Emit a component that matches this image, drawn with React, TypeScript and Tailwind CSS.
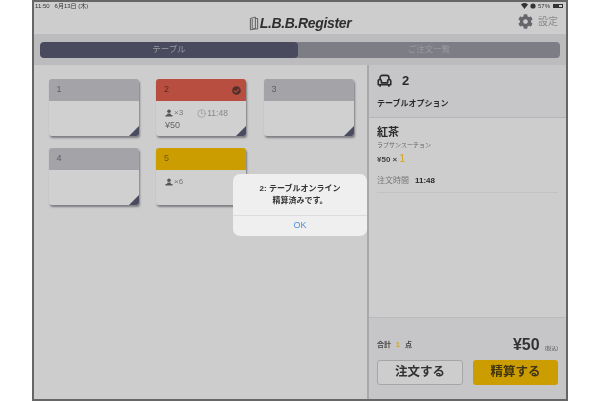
import { Clock3 } from "lucide-react";
import { FaCheckCircle, FaCog } from "react-icons/fa";

const font = { fontFamily: '"Liberation Sans", "Noto Sans CJK JP", sans-serif' };

function GuestIcon() {
  return (
    <svg width="8" height="8" viewBox="0 0 16 16" className="fill-[#55555a]">
      <circle cx="8" cy="4.5" r="3.5" />
      <path d="M5 9h6l1 3h3v3H1v-3h3z" />
    </svg>
  );
}

function BookIcon() {
  return (
    <svg width="10" height="15" viewBox="0 0 11 16" fill="none" className="stroke-[#555]">
      <path d="M1.5 2.5 7 1v12.5L1.5 15z" />
      <path d="M7 2.5h2.5V14H3" />
      <path d="M3.5 3v10" />
    </svg>
  );
}

function SofaIcon() {
  return (
    <svg width="15" height="14" viewBox="0 0 24 22" fill="none" stroke="#2a2a2a" strokeWidth="2.6" strokeLinejoin="round">
      <path d="M5 8V5.5A3.5 3.5 0 0 1 8.5 2h7A3.5 3.5 0 0 1 19 5.5V8" />
      <path d="M2 11a2.5 2.5 0 0 1 5 0v3h10v-3a2.5 2.5 0 0 1 5 0v6H2z" />
      <path d="M5 17v3M19 17v3" />
    </svg>
  );
}

function TableCard({
  num,
  color = "bg-[#a3a3a8]",
  textColor = "text-[#5d5d62]",
  corner = true,
  checked = false,
  children,
}: {
  num: string;
  color?: string;
  textColor?: string;
  corner?: boolean;
  checked?: boolean;
  children?: React.ReactNode;
}) {
  return (
    <div className="relative h-[57px] w-[90px] overflow-hidden rounded-[3px] bg-[#d0d0d0] shadow-[1px_2px_2px_rgba(60,60,70,0.55)]">
      <div className={`flex h-[22px] items-center justify-between pl-2 pr-[5px] text-[9px] ${color} ${textColor}`}>
        <span>{num}</span>
        {checked && <FaCheckCircle className="h-[9px] w-[9px] text-[#51302b]" />}
      </div>
      <div className="px-[9px] pt-[6px] text-[8px] leading-[12px] text-[#77777c]">{children}</div>
      {corner && (
        <div className="absolute bottom-0 right-0 h-0 w-0 border-b-[10px] border-l-[10px] border-b-[#4b4b60] border-l-transparent" />
      )}
    </div>
  );
}

export default function App() {
  return (
    <div className="flex h-[402px] w-[600px] justify-center overflow-hidden bg-white" style={font}>
      <div className="relative flex h-[401px] w-[536px] flex-col border-2 border-[#666] bg-[#cdcdcd] blur-[0.5px]">
        {/* status bar + title */}
        <div className="h-[32px]">
          <div className="flex h-[8px] items-center justify-between pl-px pr-[3px] text-[6px] leading-none text-[#333]">
            <span>11:50&nbsp;&nbsp;&nbsp;6月13日 (木)</span>
            <span className="flex items-center gap-[2px]">
              <svg width="15" height="6" viewBox="0 0 15 6" className="fill-[#333]">
                <path d="M0 1.5C2-.5 5-.5 7 1.5L3.5 6z" />
                <circle cx="12" cy="3" r="2.6" />
              </svg>
              <span>57%</span>
              <span className="ml-px flex h-1 w-[10px] border border-[#333]">
                <span className="w-[5px] bg-[#333]" />
              </span>
            </span>
          </div>
          <div className="relative flex h-6 items-center justify-center">
            <div className="flex items-center gap-px pt-[2px]">
              <BookIcon />
              <span className="text-[14px] font-bold italic leading-none tracking-[-0.35px] text-[#2f2f2f]">L.B.B.Register</span>
            </div>
            <div className="absolute right-[8px] top-[4px] flex items-center gap-[5px] text-[10px] text-[#8a8a8a]">
              <FaCog className="h-[15px] w-[15px] text-[#66666b]" />
              <span>設定</span>
            </div>
          </div>
        </div>

        {/* tabs */}
        <div className="flex h-[31px] items-center bg-[#bcbcbe] px-[6px]">
          <div className="flex h-[16px] w-full overflow-hidden rounded-[4px] bg-[#7d7d85] text-[8.5px] text-[#9a9aa3]">
            <div className="flex w-[258px] items-center justify-center rounded-[4px] bg-[#4a4a5e]">テーブル</div>
            <div className="flex flex-1 items-center justify-center">ご注文一覧</div>
          </div>
        </div>

        {/* main */}
        <div className="flex min-h-0 flex-1">
          <div className="flex-1 pl-[14.6px] pt-[14px]">
            <div className="grid grid-cols-[90px_90px_90px] gap-x-[17.5px] gap-y-[12px]">
              <TableCard num="1" />
              <TableCard num="2" color="bg-[#b84e3f]" textColor="text-[#5a2a24]" checked>
                <div className="flex items-center gap-[14px]">
                  <span className="flex items-center gap-px">
                    <GuestIcon />
                    ×3
                  </span>
                  <span className="flex items-center gap-px text-[8.5px] text-[#88888c]">
                    <Clock3 className="h-[9px] w-[9px]" strokeWidth={1.5} />
                    11:48
                  </span>
                </div>
                <div className="text-[9px] text-[#66666b]">¥50</div>
              </TableCard>
              <TableCard num="3" />
              <TableCard num="4" />
              <TableCard num="5" color="bg-[#cb9d00]" textColor="text-[#6e5a14]" corner={false}>
                <span className="flex items-center gap-px">
                  <GuestIcon />
                  ×6
                </span>
              </TableCard>
            </div>
          </div>

          {/* right panel */}
          <div className="flex w-[199px] flex-col border-l-2 border-[#a9a9ab]">
            <div className="h-[53px] border-b border-[#b5b5b7] bg-[#c6c6c8] px-2 pt-[8px] text-[#2a2a2a]">
              <div className="flex items-center gap-[10px]">
                <SofaIcon />
                <span className="text-[13px] font-bold leading-[16px]">2</span>
              </div>
              <div className="mt-[9px] text-[8px] font-bold leading-3">テーブルオプション</div>
            </div>
            <div className="flex-1 px-2 pt-[7px]">
              <div className="text-[11px] font-bold leading-[14px] text-[#2a2a2a]">紅茶</div>
              <div className="mt-[2px] text-[6px] leading-[9px] text-[#66666a]">ラブサンスーチョン</div>
              <div className="mt-[3px] text-[8px] font-bold leading-3 text-[#444]">
                ¥50 × <span className="text-[10px] font-normal text-[#d0a420]">1</span>
              </div>
              <div className="mt-[9px] flex items-center gap-[6px] border-b border-[#c2c2c2] pb-[5px] leading-3">
                <span className="text-[8px] text-[#77777a]">注文時間</span>
                <span className="text-[8px] font-bold text-[#2a2a2a]">11:48</span>
              </div>
            </div>
            <div className="h-[82px] border-t border-[#bbbbbd] bg-[#c6c6c8] px-2 pt-[18px]">
              <div className="flex items-end justify-between">
                <div className="flex gap-[5px] pb-[3px] text-[7px] font-bold leading-[10px] text-[#444]">
                  <span>合計</span>
                  <span className="text-[#d0a420]">1</span>
                  <span>点</span>
                </div>
                <div className="flex items-end gap-[5px]">
                  <span className="text-[16px] font-bold leading-[17px] text-[#333]">¥50</span>
                  <span className="pb-px text-[5px] leading-[8px] text-[#555]">(税込)</span>
                </div>
              </div>
              <div className="mt-[7px] flex gap-[10px]">
                <button className="flex h-[25px] w-[87px] items-center justify-center rounded-[3px] border border-[#a5a5a7] bg-[#cdcdcd] text-[12.5px] font-bold text-[#333]">
                  注文する
                </button>
                <button className="flex h-[25px] w-[86px] items-center justify-center rounded-[3px] bg-[#cb9d00] text-[12.5px] font-bold text-[#3f3410]">
                  精算する
                </button>
              </div>
            </div>
          </div>
        </div>

        {/* alert */}
        <div className="absolute left-[199px] top-[172px] flex h-[62px] w-[134px] flex-col rounded-[7px] bg-[#efefef]">
          <div className="flex flex-1 flex-col items-center justify-center text-[8px] font-bold leading-[12px] text-[#333]">
            <span>2: テーブルオンライン</span>
            <span>精算済みです。</span>
          </div>
          <div className="flex h-[21px] items-center justify-center border-t border-[#dcdcdc] text-[9px] text-[#4a8fe0]">OK</div>
        </div>
      </div>
    </div>
  );
}
